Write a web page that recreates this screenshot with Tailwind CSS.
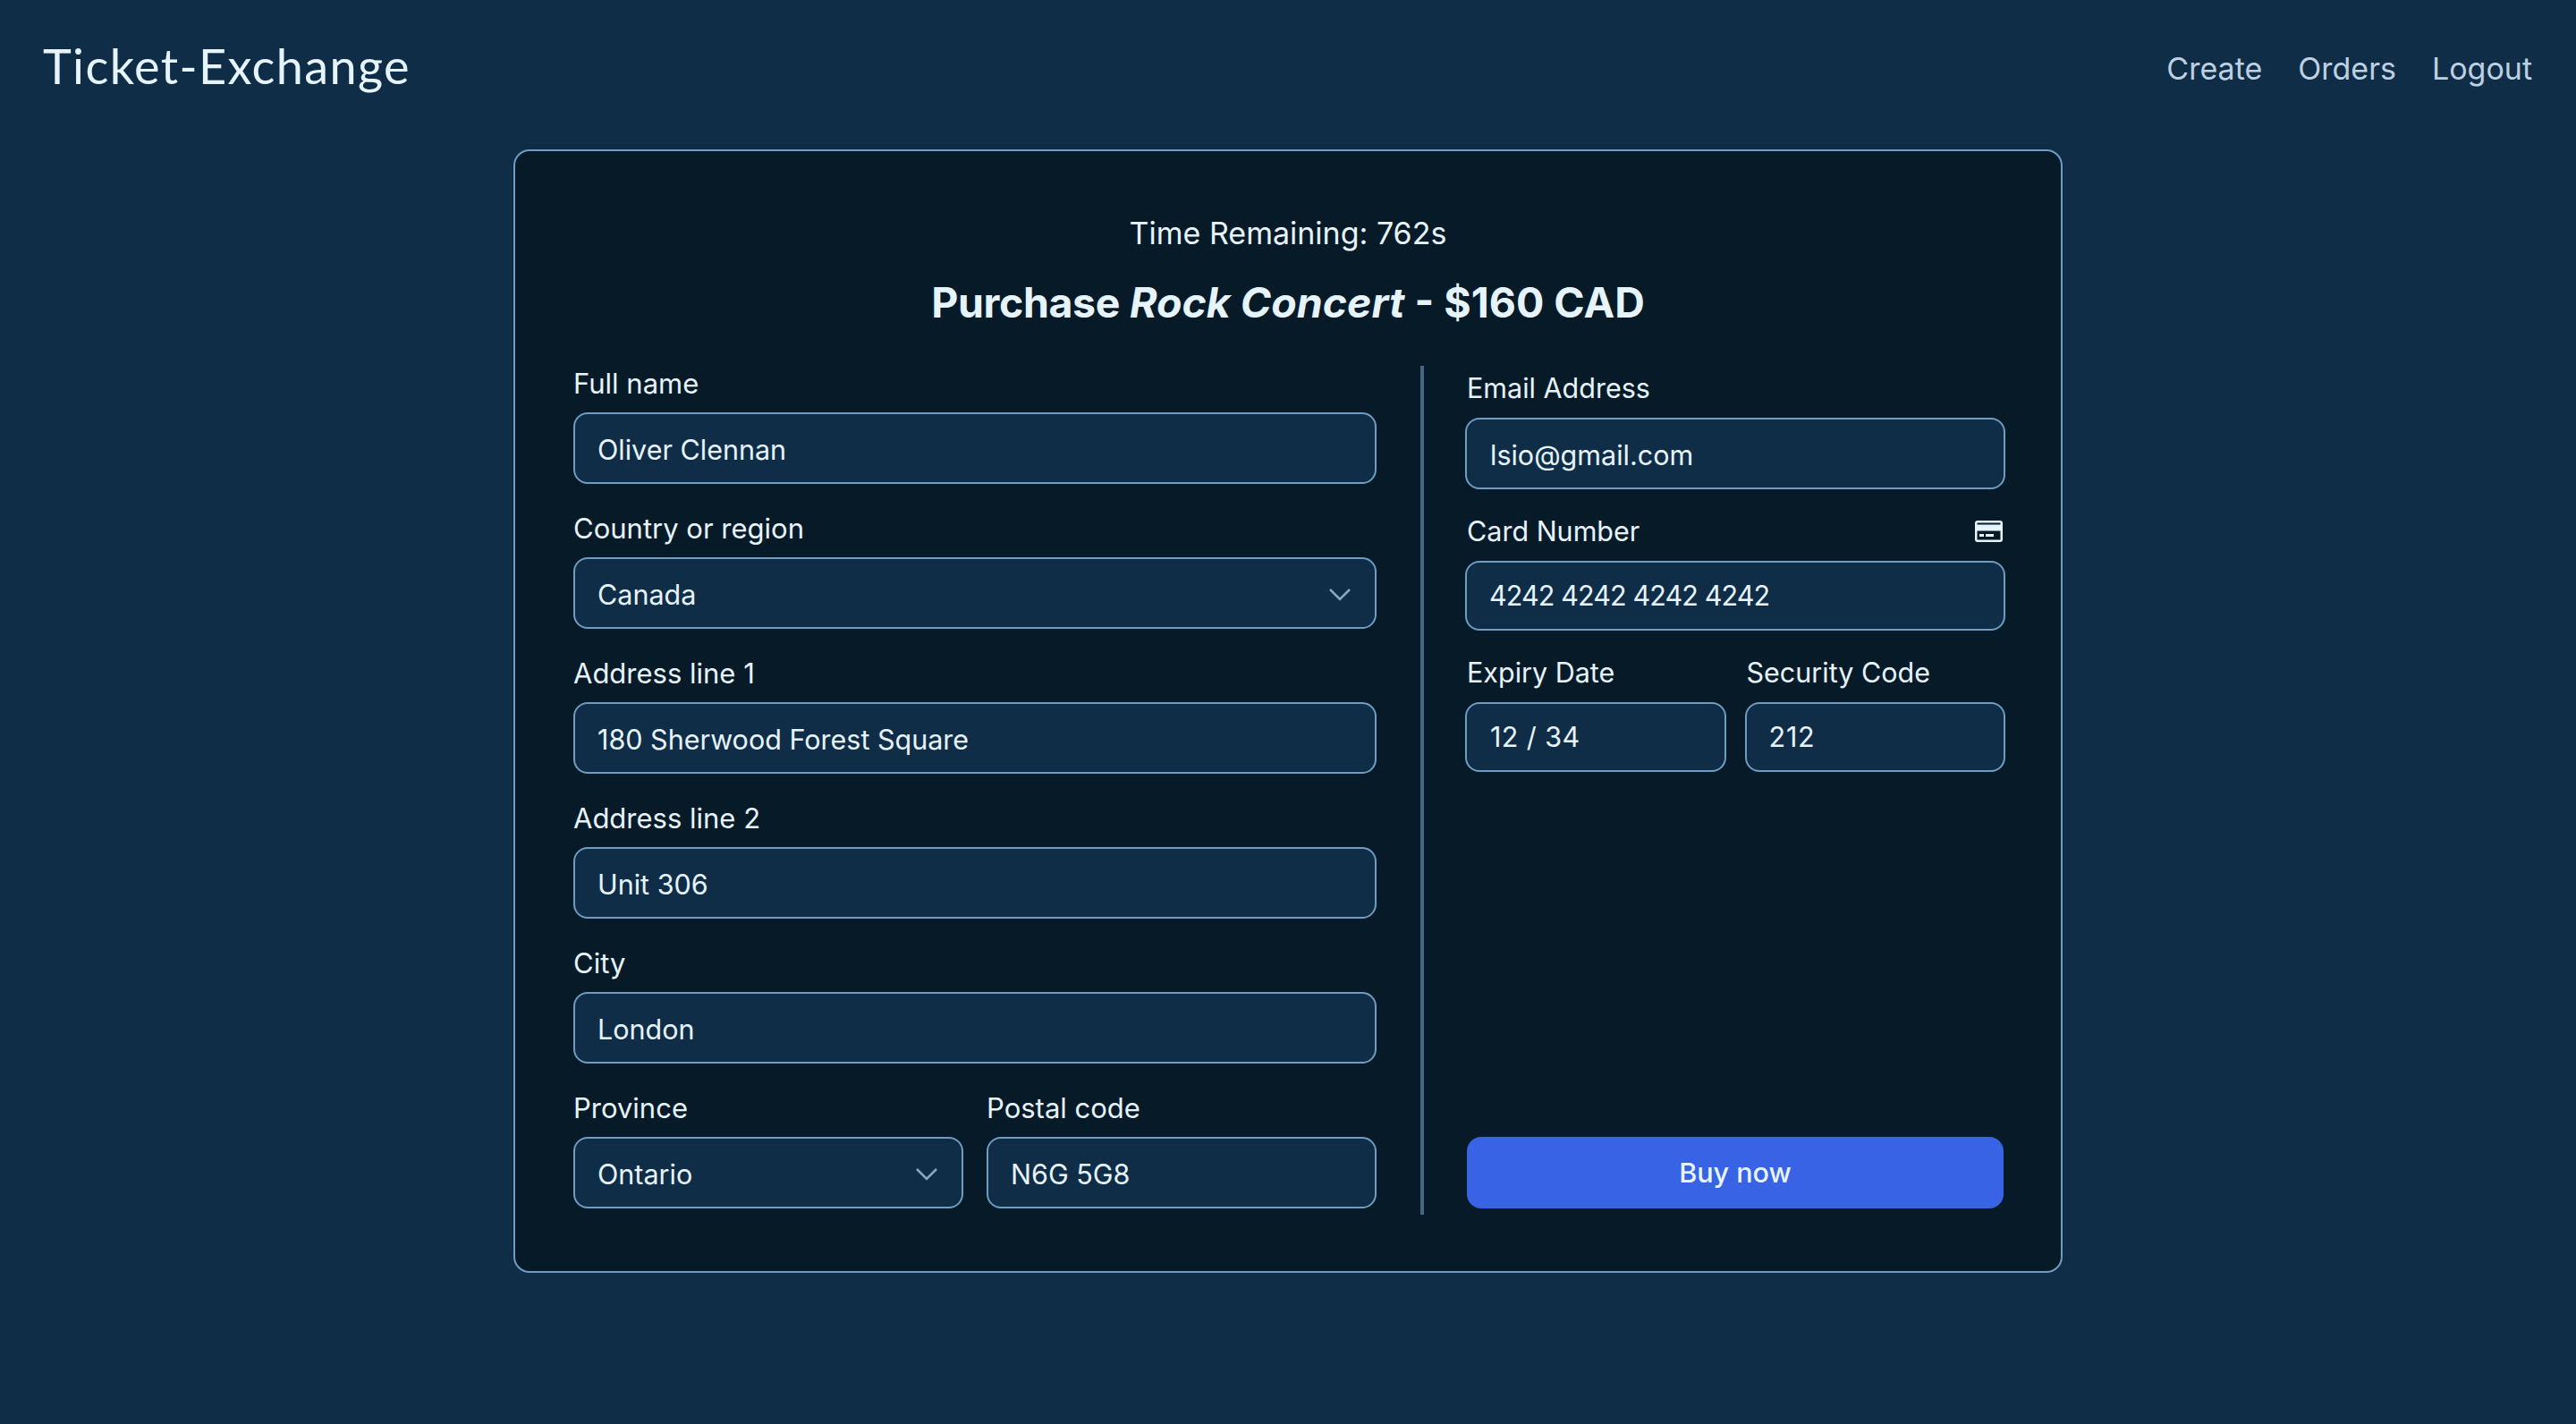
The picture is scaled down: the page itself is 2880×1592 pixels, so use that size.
<!DOCTYPE html>
<html lang="en">
<head>
    <meta charset="UTF-8">
    <title>Ticket-Exchange</title>
    <script src="https://cdn.jsdelivr.net/npm/@tailwindcss/browser@4"></script>
</head>
<body class="bg-[#102d47] min-h-screen text-[#e6f4ff] text-[30.5px] leading-[40px] font-[Inter,sans-serif]">
    <nav class="flex justify-between items-start h-[167px] pl-[48px] pr-[49px]">
        <a class="mt-[36px] text-[54px] leading-[76px] tracking-[1.4px] font-normal font-[Lato,sans-serif] text-[#e6f4ff]">Ticket-Exchange</a>
        <div class="flex gap-[40px] mt-[57px] text-[34px] text-[#bcd0e2]">
            <a>Create</a>
            <a>Orders</a>
            <a>Logout</a>
        </div>
    </nav>

    <main class="w-[1732px] h-[1256px] ml-[574px] pl-[65px] pr-[62px] pt-[72px] pb-[63px] bg-[#071a28] border-2 border-[#6f9cc0] rounded-[18px] flex flex-col">
        <p class="text-center text-[34px] pr-[3px]">Time Remaining: 762s</p>
        <h2 class="mt-[27px] mb-[41px] pr-[3px] text-center text-[46.5px] leading-[60px] font-bold"><span class="tracking-[-0.4px]">Purchase</span> <em>Rock Concert</em> - $160 CAD</h2>

        <div class="flex flex-1">
            <form class="w-[898px] flex flex-col gap-[30px]">
                <div>
                    <label class="block mb-[12px] text-[31px]">Full name</label>
                    <div class="h-[80px] pl-[25px] pt-[3px] flex items-center bg-[#102d47] border-2 border-[#6f9cc0] rounded-[16px]">Oliver Clennan</div>
                </div>
                <div>
                    <label class="block mb-[12px] text-[31px]">Country or region</label>
                    <div class="h-[80px] pl-[25px] pr-[27px] pt-[3px] flex items-center justify-between bg-[#102d47] border-2 border-[#6f9cc0] rounded-[16px]">
                        Canada
                        <svg class="w-[24px] h-[14px]" viewBox="0 0 24 14" fill="none" stroke="#85a8c4" stroke-width="2.5"><path d="M1 1l11 11L23 1"/></svg>
                    </div>
                </div>
                <div>
                    <label class="block mb-[12px] text-[31px]">Address line 1</label>
                    <div class="h-[80px] pl-[25px] pt-[3px] flex items-center bg-[#102d47] border-2 border-[#6f9cc0] rounded-[16px]">180 Sherwood Forest Square</div>
                </div>
                <div>
                    <label class="block mb-[12px] text-[31px]">Address line 2</label>
                    <div class="h-[80px] pl-[25px] pt-[3px] flex items-center bg-[#102d47] border-2 border-[#6f9cc0] rounded-[16px]">Unit 306</div>
                </div>
                <div>
                    <label class="block mb-[12px] text-[31px]">City</label>
                    <div class="h-[80px] pl-[25px] pt-[3px] flex items-center bg-[#102d47] border-2 border-[#6f9cc0] rounded-[16px]">London</div>
                </div>
                <div class="flex gap-[26px]">
                    <div class="flex-1">
                        <label class="block mb-[12px] text-[31px]">Province</label>
                        <div class="h-[80px] pl-[25px] pr-[27px] pt-[3px] flex items-center justify-between bg-[#102d47] border-2 border-[#6f9cc0] rounded-[16px]">
                            Ontario
                            <svg class="w-[24px] h-[14px]" viewBox="0 0 24 14" fill="none" stroke="#85a8c4" stroke-width="2.5"><path d="M1 1l11 11L23 1"/></svg>
                        </div>
                    </div>
                    <div class="flex-1">
                        <label class="block mb-[12px] text-[31px]">Postal code</label>
                        <div class="h-[80px] pl-[25px] pt-[3px] flex items-center bg-[#102d47] border-2 border-[#6f9cc0] rounded-[16px]">N6G 5G8</div>
                    </div>
                </div>
            </form>

            <div class="w-[4px] ml-[49px] mr-[46px] bg-[#486581]"></div>

            <div class="w-[604px] pt-[5px] flex flex-col">
                <label class="block mb-[13px] pl-[2px]">Email Address</label>
                <div class="h-[80px] pl-[26px] pt-[3px] flex items-center bg-[#102d47] border-2 border-[#6f9cc0] rounded-[16px]">lsio@gmail.com</div>
                <div class="mt-[27px] mb-[13px] pl-[2px] flex items-center justify-between">
                    <label>Card Number</label>
                    <svg class="w-[31px] h-[24px] mr-[3px]" viewBox="0 0 31 24">
                        <rect width="31" height="24" rx="3" fill="#e6f4ff"/>
                        <rect x="2.5" y="2.5" width="26" height="2" fill="#071a28"/>
                        <rect x="2.5" y="11.5" width="26" height="10" fill="#071a28"/>
                        <rect x="5" y="15" width="5" height="3" fill="#e6f4ff"/>
                        <rect x="12" y="15" width="9" height="3" fill="#e6f4ff"/>
                    </svg>
                </div>
                <div class="h-[78px] pl-[25px] flex items-center bg-[#102d47] border-2 border-[#6f9cc0] rounded-[16px] tracking-[-0.9px]">4242 4242 4242 4242</div>
                <div class="mt-[27px] flex gap-[21px]">
                    <div class="flex-1">
                        <label class="block mb-[13px] pl-[2px]">Expiry Date</label>
                        <div class="h-[78px] pl-[26px] flex items-center bg-[#102d47] border-2 border-[#6f9cc0] rounded-[16px] tracking-[0.4px]">12 / 34</div>
                    </div>
                    <div class="flex-1">
                        <label class="block mb-[13px] pl-[2px]">Security Code</label>
                        <div class="h-[78px] pl-[25px] flex items-center bg-[#102d47] border-2 border-[#6f9cc0] rounded-[16px] tracking-[0.8px]">212</div>
                    </div>
                </div>
                <button class="mt-auto mb-[7px] h-[80px] mx-[2px] bg-[#3863e5] rounded-[16px] font-medium text-[#e6f4ff]">Buy now</button>
            </div>
        </div>
    </main>
</body>
</html>
